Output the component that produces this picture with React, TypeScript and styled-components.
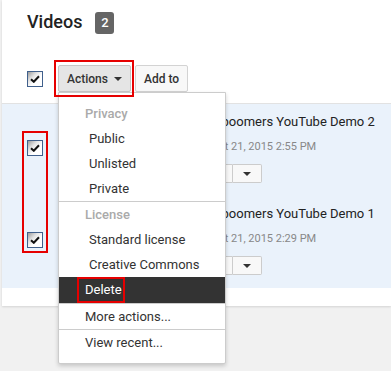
import styled, { createGlobalStyle } from 'styled-components';

const GlobalStyle = createGlobalStyle`
    html, body {
        margin: 0;
        padding: 0;
        background: #f1f1f1;
        font-family: Roboto, "Liberation Sans", Arial, sans-serif;
        color: #333;
    }
`

const videos = [
    { title: 'Babyboomers YouTube Demo 2', date: 'On Oct 21, 2015 2:55 PM' },
    { title: 'Babyboomers YouTube Demo 1', date: 'On Oct 21, 2015 2:29 PM' },
]

function Check() {
    return (
        <CheckBox>
            <svg width="10" height="8" viewBox="0 0 10 8">
                <path d="M1 4.2 L3.8 6.8 L9 1.2" fill="none" stroke="#111" strokeWidth="2" />
            </svg>
        </CheckBox>
    )
}

function Caret() {
    return (
        <svg width="8" height="4" viewBox="0 0 8 4">
            <path d="M0 0 H8 L4 4 Z" fill="#333" />
        </svg>
    )
}

export default function App() {
    return (
        <>
            <GlobalStyle />
            <Page>
                <Card>
                    <Header>
                        <Title>Videos</Title>
                        <Badge>2</Badge>
                    </Header>
                    <Toolbar>
                        <Check />
                        <ActionsWrap>
                            <ToolButton $pressed $width={73}>
                                Actions <Caret />
                            </ToolButton>
                            <Menu>
                                <MenuHeading>Privacy</MenuHeading>
                                <MenuItem $indent>Public</MenuItem>
                                <MenuItem $indent>Unlisted</MenuItem>
                                <MenuItem $indent>Private</MenuItem>
                                <MenuDivider />
                                <MenuHeading>License</MenuHeading>
                                <MenuItem $indent>Standard license</MenuItem>
                                <MenuItem $indent>Creative Commons</MenuItem>
                                <MenuItem $active>Delete</MenuItem>
                                <MenuDivider />
                                <MenuItem>More actions...</MenuItem>
                                <MenuDivider />
                                <MenuItem>View recent...</MenuItem>
                            </Menu>
                        </ActionsWrap>
                        <ToolButton $width={53}>Add to</ToolButton>
                    </Toolbar>
                    <VideoList>
                        {videos.map((v) => (
                            <VideoRow key={v.title}>
                                <RowCheck><Check /></RowCheck>
                                <Thumb />
                                <VideoInfo>
                                    <VideoTitle>{v.title}</VideoTitle>
                                    <VideoDate>{v.date}</VideoDate>
                                    <ButtonGroup>
                                        <GroupButton>Edit</GroupButton>
                                        <GroupButton $caret><Caret /></GroupButton>
                                    </ButtonGroup>
                                </VideoInfo>
                            </VideoRow>
                        ))}
                    </VideoList>
                    <Footer />
                </Card>
                <Annotation $left={54} $top={60} $width={80} $height={37} />
                <Annotation $left={22} $top={131} $width={26} $height={122} />
                <Annotation $left={77} $top={277} $width={48} $height={26} />
            </Page>
        </>
    )
}

const Page = styled.div`
    position: relative;
    height: 371px;
    padding-left: 2px;
    overflow: hidden;
    background: #f1f1f1;
`

const Card = styled.main`
    background: #fff;
    box-shadow: 0 1px 2px rgba(0, 0, 0, 0.12);
`

const Header = styled.header`
    display: flex;
    align-items: center;
    gap: 13px;
    padding: 10px 0 0 25px;
    height: 24px;
`

const Title = styled.h1`
    margin: 0;
    font-size: 18px;
    font-weight: 500;
    color: #222;
    line-height: 24px;
`

const Badge = styled.span`
    display: flex;
    align-items: center;
    justify-content: center;
    width: 19px;
    height: 22px;
    margin-top: 1px;
    border-radius: 3px;
    background: #656565;
    color: #fff;
    font-size: 13px;
    font-weight: 500;
`

const Toolbar = styled.div`
    display: flex;
    align-items: center;
    gap: 4px;
    margin-top: 31px;
    padding-left: 25px;
    height: 27px;
`

const CheckBox = styled.span`
    display: flex;
    align-items: center;
    justify-content: center;
    box-sizing: border-box;
    width: 16px;
    height: 16px;
    border: 1px solid #40608c;
    background: linear-gradient(135deg, #9a9a9a 0%, #e4e4e4 35%, #fff 60%);
`

const ActionsWrap = styled.div`
    position: relative;
    margin-left: 11px;
`

const ToolButton = styled.button<{ $pressed?: boolean; $width: number }>`
    display: flex;
    align-items: center;
    justify-content: center;
    gap: 6px;
    box-sizing: border-box;
    width: ${(p) => p.$width}px;
    height: 27px;
    padding: 0;
    border: 1px solid ${(p) => (p.$pressed ? '#c6c6c6' : '#d3d3d3')};
    border-radius: 2px;
    background: ${(p) => (p.$pressed ? '#e5e5e5' : '#f8f8f8')};
    font-family: inherit;
    font-size: 12px;
    font-weight: 500;
    color: #333;
`

const Menu = styled.div`
    position: absolute;
    top: 100%;
    left: 0;
    z-index: 10;
    box-sizing: border-box;
    width: 168px;
    padding: 8px 0;
    background: #fff;
    border: 1px solid #ccc;
    border-radius: 0 0 2px 2px;
    box-shadow: 0 2px 4px rgba(0, 0, 0, 0.18);
`

const MenuHeading = styled.div`
    height: 25px;
    line-height: 25px;
    padding-left: 26px;
    font-size: 13px;
    font-weight: 500;
    color: #aaa;
`

const MenuItem = styled.div<{ $indent?: boolean; $active?: boolean }>`
    height: 25px;
    line-height: 25px;
    padding-left: ${(p) => (p.$indent ? 30 : 26)}px;
    font-size: 13px;
    color: ${(p) => (p.$active ? '#fff' : '#333')};
    background: ${(p) => (p.$active ? '#333' : 'transparent')};
    border-bottom: ${(p) => (p.$active ? '1px solid #333' : 'none')};
`

const MenuDivider = styled.div`
    height: 1px;
    background: #ccc;
`

const VideoList = styled.section`
    margin-top: 11px;
    border-top: 1px solid #e2e2e2;
    background: #eaf2fb;
`

const VideoRow = styled.div`
    display: flex;
    align-items: flex-start;
    height: 92px;
    box-sizing: border-box;
    padding: 10px 0 0 25px;
`

const RowCheck = styled.div`
    margin-top: 26px;
`

const Thumb = styled.div`
    width: 120px;
    height: 68px;
    margin: 0 14px 0 16px;
    background: #ccc;
`

const VideoInfo = styled.div`
    display: flex;
    flex-direction: column;
`

const VideoTitle = styled.div`
    font-size: 13px;
    line-height: 16px;
    color: #222;
    white-space: nowrap;
`

const VideoDate = styled.div`
    margin-top: 9px;
    padding-left: 2px;
    font-size: 11px;
    line-height: 16px;
    color: #888;
    white-space: nowrap;
`

const ButtonGroup = styled.div`
    display: flex;
    margin-top: 9px;
`

const GroupButton = styled.button<{ $caret?: boolean }>`
    display: flex;
    align-items: center;
    justify-content: center;
    box-sizing: border-box;
    height: 19px;
    width: ${(p) => (p.$caret ? 29 : 40)}px;
    padding: 0;
    border: 1px solid #ccc;
    border-left-width: ${(p) => (p.$caret ? 0 : 1)}px;
    border-radius: ${(p) => (p.$caret ? '0 2px 2px 0' : '2px 0 0 2px')};
    background: #f8f8f8;
    font-family: inherit;
    font-size: 11px;
    color: #333;
`

const Footer = styled.div`
    height: 18px;
`

const Annotation = styled.div<{ $left: number; $top: number; $width: number; $height: number }>`
    position: absolute;
    z-index: 20;
    left: ${(p) => p.$left}px;
    top: ${(p) => p.$top}px;
    width: ${(p) => p.$width}px;
    height: ${(p) => p.$height}px;
    box-sizing: border-box;
    border: 2px solid #e60000;
    pointer-events: none;
`
